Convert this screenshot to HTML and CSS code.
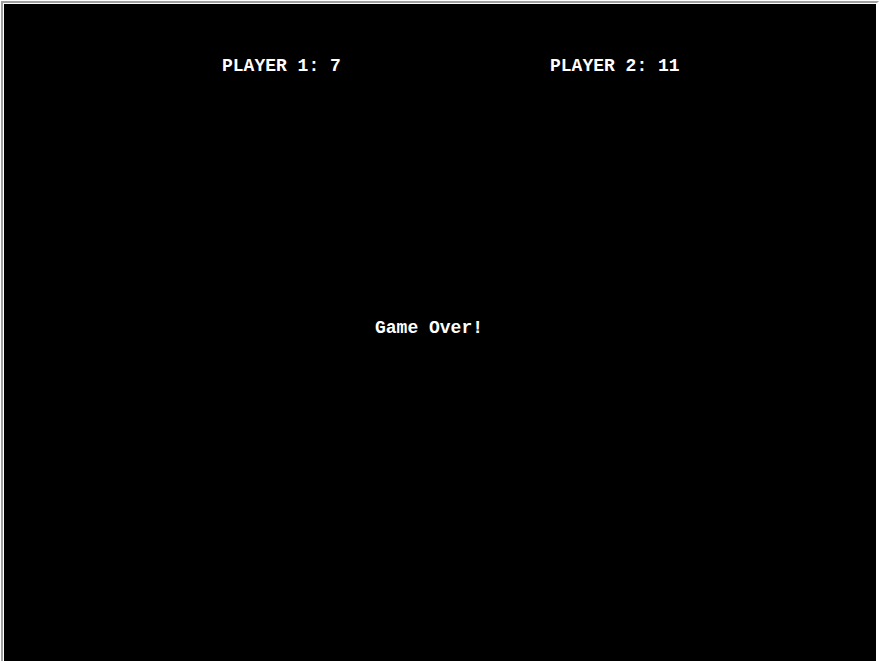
FILE: index.html
```html
<!DOCTYPE html>
<html>
<head>
<meta charset="utf-8">
<link rel="stylesheet" href="styles.css">
</head>
<body>
<div class="frame">
  <div class="game">
    <div class="score p1">PLAYER 1: 7</div>
    <div class="score p2">PLAYER 2: 11</div>
    <div class="message">Game Over!</div>
  </div>
</div>
</body>
</html>
```
FILE: styles.css
```css
html, body {
  margin: 0;
  padding: 0;
  background: #fff;
  overflow: hidden;
  height: 100%;
}
.frame {
  margin: 1px 0 0 1px;
  border-style: solid;
  border-width: 2px 2px 0 2px;
  border-color: #a0a0a0 #fff #fff #a0a0a0;
  padding: 1px 1px 0 1px;
  width: 872px;
}
.game {
  position: relative;
  height: 657px;
  background: #000;
  color: #fff;
  font-family: "Liberation Mono", "Courier New", monospace;
  font-weight: bold;
  font-size: 18px;
  line-height: 18px;
}
.score, .message {
  position: absolute;
  white-space: pre;
}
.p1 { left: 218px; top: 53px; }
.p2 { left: 546px; top: 53px; }
.message { left: 371px; top: 315px; }
```
